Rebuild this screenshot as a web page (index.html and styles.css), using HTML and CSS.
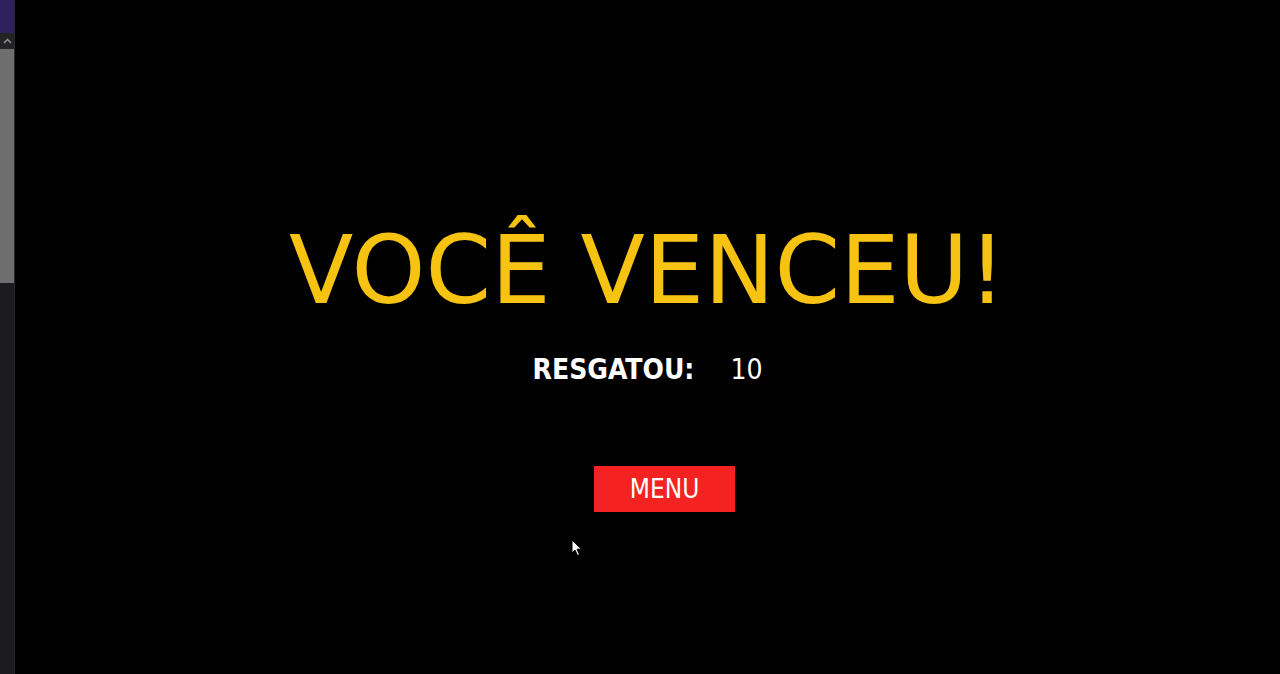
FILE: index.html
```html
<!DOCTYPE html>
<html lang="pt-BR">
<head>
    <meta charset="UTF-8">
    <meta name="viewport" content="width=device-width, initial-scale=1.0">
    <title>Você venceu</title>
    <link rel="stylesheet" href="styles.css">
</head>
<body>

    <div class="sidebar">
        <div class="sidebar-top"></div>
        <div class="scroll-up">
            <svg width="9" height="6" viewBox="0 0 9 6"><path d="M1 5 L4.5 1.5 L8 5" fill="none" stroke="#9a9a9a" stroke-width="1.4"/></svg>
        </div>
        <div class="scroll-thumb"></div>
        <div class="scroll-track"></div>
    </div>

    <main id="fim">
        <h1 class="titulo">VOCÊ VENCEU!</h1>
        <div class="placar">
            <span class="rotulo">RESGATOU:</span>
            <span id="resgatados">10</span>
        </div>
        <button class="btn-menu" id="menu">MENU</button>

        <!-- ponteiro do mouse -->
        <svg class="cursor" width="12" height="18" viewBox="0 0 12 18">
            <path d="M1 1 L1 14 L4 11 L6.5 16.5 L8.5 15.6 L6 10.2 L10.5 10.2 Z" fill="#fff" stroke="#000" stroke-width="1"/>
        </svg>
    </main>

</body>
</html>
```

FILE: styles.css
```css
body {
    margin: 0;
    padding: 0;
    background-color: #000;
    font-family: "DejaVu Sans", Verdana, sans-serif;
    display: flex;
    height: 100vh;
    overflow: hidden;
}
.sidebar {
    width: 15px;
    display: flex;
    flex-direction: column;
    background-color: #1c1c1e;
    border-right: 1px solid #2a2a2c;
    box-sizing: border-box;
}
.sidebar-top {
    height: 33px;
    background-color: #2e2160;
}
.scroll-up {
    height: 16px;
    background-color: #232325;
    display: flex;
    align-items: center;
    justify-content: center;
}
.scroll-thumb {
    height: 234px;
    background-color: #6e6e6e;
}
.scroll-track {
    flex: 1;
}
#fim {
    flex: 1;
    position: relative;
    display: flex;
    flex-direction: column;
    align-items: center;
    padding-top: 216px;
}
.titulo {
    margin: 0;
    font-size: 94px;
    font-weight: normal;
    line-height: 109px;
    color: #f6c312;
}
.placar {
    margin-top: 29px;
    display: flex;
    gap: 36px;
    color: #fff;
    font-family: "DejaVu Sans Condensed", "DejaVu Sans", sans-serif;
    font-stretch: condensed;
    font-size: 28px;
    font-weight: bold;
    line-height: 32px;
}
#resgatados {
    font-weight: normal;
}
.btn-menu {
    margin-top: 80px;
    margin-left: 34px;
    width: 141px;
    height: 46px;
    padding: 0;
    border: none;
    background-color: #f52222;
    color: #fff;
    font-family: "DejaVu Sans Condensed", "DejaVu Sans", sans-serif;
    font-stretch: condensed;
    font-size: 26px;
    cursor: pointer;
}
.cursor {
    position: absolute;
    left: 556px;
    top: 539px;
}
```
